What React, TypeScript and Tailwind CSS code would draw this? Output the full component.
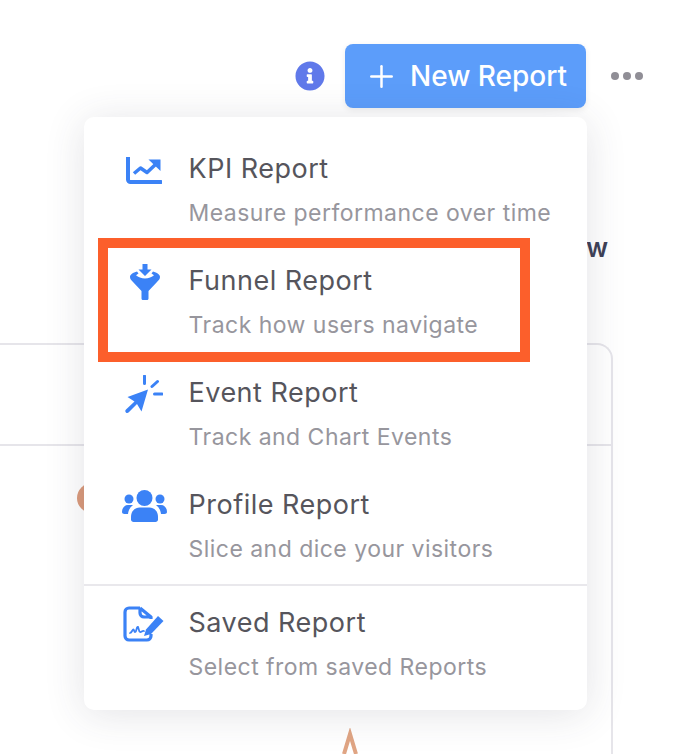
import { Plus } from 'lucide-react';
import { ReactNode } from 'react';
import { FaInfoCircle } from 'react-icons/fa';

function KpiIcon() {
  return (
    <svg className="mt-[6px] ml-[4px]" width="36" height="27" viewBox="0 0 36 27" fill="none">
      <path d="M2 0v22.500a2.500 2.500 0 0 0 2.500 2.500H35" stroke="#3b82f6" strokeWidth="4" strokeLinecap="round" />
      <path d="M8 16.500l6.500-5.500 6.500 4.500 9-8.500" stroke="#3b82f6" strokeWidth="3.600" strokeLinejoin="round" />
      <path d="M22.500 2.500H34.500V14z" fill="#3b82f6" />
    </svg>
  );
}

function FunnelIcon() {
  return (
    <svg className="mt-[1px] ml-[8px]" width="30" height="36" viewBox="0 0 30 36" fill="none">
      <path d="M12.500 0h5v5.500h4l-6.500 6.500-6.500-6.500h4z" fill="#3b82f6" />
      <path d="M7 7.500C3 8.500 0 10.500 0 13c0 2 1.500 3.500 3 5l8.500 9v7.500c0 1 1 1.500 1.500 1.500h4c.6 0 1.500-.5 1.500-1.500V27L27 18c1.500-1.500 3-3 3-5 0-2.500-3-4.500-7-5.500l-1.500 2 2.500 1.800C22 13 18.500 14.500 15 14.500S8 13 6 11.300l2.500-1.800z" fill="#3b82f6" />
    </svg>
  );
}

function EventIcon() {
  return (
    <svg className="ml-[3px]" width="38" height="38" viewBox="0 0 38 38" fill="none">
      <path d="M23 14.500L2.500 22l7 4.500L1 34.500c-1 1-.9 2.200-.1 2.900s1.900.8 2.900-.2l8.200-8.200 4.500 7.500z" fill="#3b82f6" />
      <path d="M19.500 1v7.500M32.500 6.500l-5.500 5M29.500 19h7.500" stroke="#3b82f6" strokeWidth="3" strokeLinecap="round" />
    </svg>
  );
}

function ProfileIcon() {
  return (
    <svg className="mt-[3px]" width="45" height="32" viewBox="0 0 45 32" fill="#3b82f6">
      <circle cx="22.500" cy="8" r="8" />
      <circle cx="7" cy="9" r="4.500" />
      <circle cx="38" cy="9" r="4.500" />
      <path d="M0 22c0-4 2.500-7 6-7h5c-3 2.500-4.500 5-5 9H2.500C1 24 0 23.200 0 22z" />
      <path d="M45 22c0-4-2.500-7-6-7h-5c3 2.500 4.500 5 5 9h3.500c1.500 0 2.500-.8 2.500-2z" />
      <path d="M9 27c0-6 4-9.500 8.500-9.500h10c4.500 0 8.500 3.500 8.500 9.500v2.500c0 1.500-1.200 2.500-2.500 2.500h-22C10.200 32 9 31 9 29.500z" />
    </svg>
  );
}

function SavedIcon() {
  return (
    <svg className="mt-[1px] ml-[1px]" width="42" height="36" viewBox="0 0 42 36" fill="none">
      <path d="M17 2H6a4 4 0 0 0-4 4v24a4 4 0 0 0 4 4h18a4 4 0 0 0 4-4v-2M17 2l11 9v2M17 2v5a4 4 0 0 0 4 4h7" stroke="#3b82f6" strokeWidth="3.200" strokeLinejoin="round" />
      <path d="M7 27c2-.5 2.500-4 3.500-3.500s.5 3 1.800 2.500 1-4 2.200-5 1 4.500 2.500 5 2-1.500 4-1" stroke="#3b82f6" strokeWidth="1.800" strokeLinecap="round" />
      <path d="M23 23.500L35 10l5.500 5L28 28l-7 2z" fill="#3b82f6" />
    </svg>
  );
}

function MenuItem({ icon, title, sub }: { icon: ReactNode; title: string; sub: string }) {
  return (
    <div className="flex pl-[38px]">
      <div className="w-[66.500px] shrink-0">{icon}</div>
      <div>
        <div className="text-[27px] leading-[36px] tracking-[0.5px] text-[#56555c]">{title}</div>
        <div className="mt-[11px] text-[23px] leading-[30px] tracking-[0.47px] text-[#97969d]">{sub}</div>
      </div>
    </div>
  );
}

export default function App() {
  return (
    <div className="relative h-[754px] w-[690px] overflow-hidden bg-white font-['Inter',sans-serif]">
      {/* page behind the menu */}
      <div className="flex items-center justify-end pt-[44px] pr-[47px]">
        <FaInfoCircle size={30} color="#6079ea" />
        <button className="ml-[20px] flex h-[64px] w-[241px] items-center rounded-[8px] bg-[#5c9dfa] pl-[20px] text-[28px] font-medium text-white shadow-[0_2px_6px_rgba(0,0,0,0.08)]">
          <Plus size={35} strokeWidth={1.700} className="-ml-[1px]" />
          <span className="ml-[11px]">New Report</span>
        </button>
        <div className="ml-[25px] flex gap-[4px]">
          <span className="h-[8px] w-[8px] rounded-full bg-[#908e96]" />
          <span className="h-[8px] w-[8px] rounded-full bg-[#908e96]" />
          <span className="h-[8px] w-[8px] rounded-full bg-[#908e96]" />
        </div>
      </div>
      <div className="mt-[122px] pr-[82px] text-right text-[26px] leading-[36px] font-semibold text-[#3e4157]">w</div>
      <div className="mt-[77px] mr-[77px] h-[500px] rounded-tr-[16px] border-t-2 border-r-2 border-[#e6e5ea]">
        <div className="mt-[99px] border-t-2 border-[#e6e5ea]" />
      </div>
      <div className="absolute top-[483px] left-[77px] h-[30px] w-[30px] rounded-full bg-[#da9a7b]" />
      <svg className="absolute top-[728px] left-[338px]" width="24" height="26" viewBox="0 0 24 26" fill="none">
        <path d="M6 26L12 6l6 20" stroke="#e0a584" strokeWidth="4" />
      </svg>

      {/* dropdown */}
      <div className="absolute top-[117px] left-[84px] w-[503px] rounded-[10px] bg-white pt-[34px] pb-[28px] shadow-[0_4px_40px_rgba(60,60,80,0.14)]">
        <div className="flex flex-col gap-[35px]">
          <MenuItem icon={<KpiIcon />} title="KPI Report" sub="Measure performance over time" />
          <MenuItem icon={<FunnelIcon />} title="Funnel Report" sub="Track how users navigate" />
          <MenuItem icon={<EventIcon />} title="Event Report" sub="Track and Chart Events" />
          <MenuItem icon={<ProfileIcon />} title="Profile Report" sub="Slice and dice your visitors" />
        </div>
        <div className="mt-[20px] border-t-2 border-[#e9e8ec] pt-[19px]">
          <MenuItem icon={<SavedIcon />} title="Saved Report" sub="Select from saved Reports" />
        </div>
        <div className="absolute top-[121px] left-[14px] h-[124px] w-[432px] border-[10px] border-[#fc5f2b]" />
      </div>
    </div>
  );
}
